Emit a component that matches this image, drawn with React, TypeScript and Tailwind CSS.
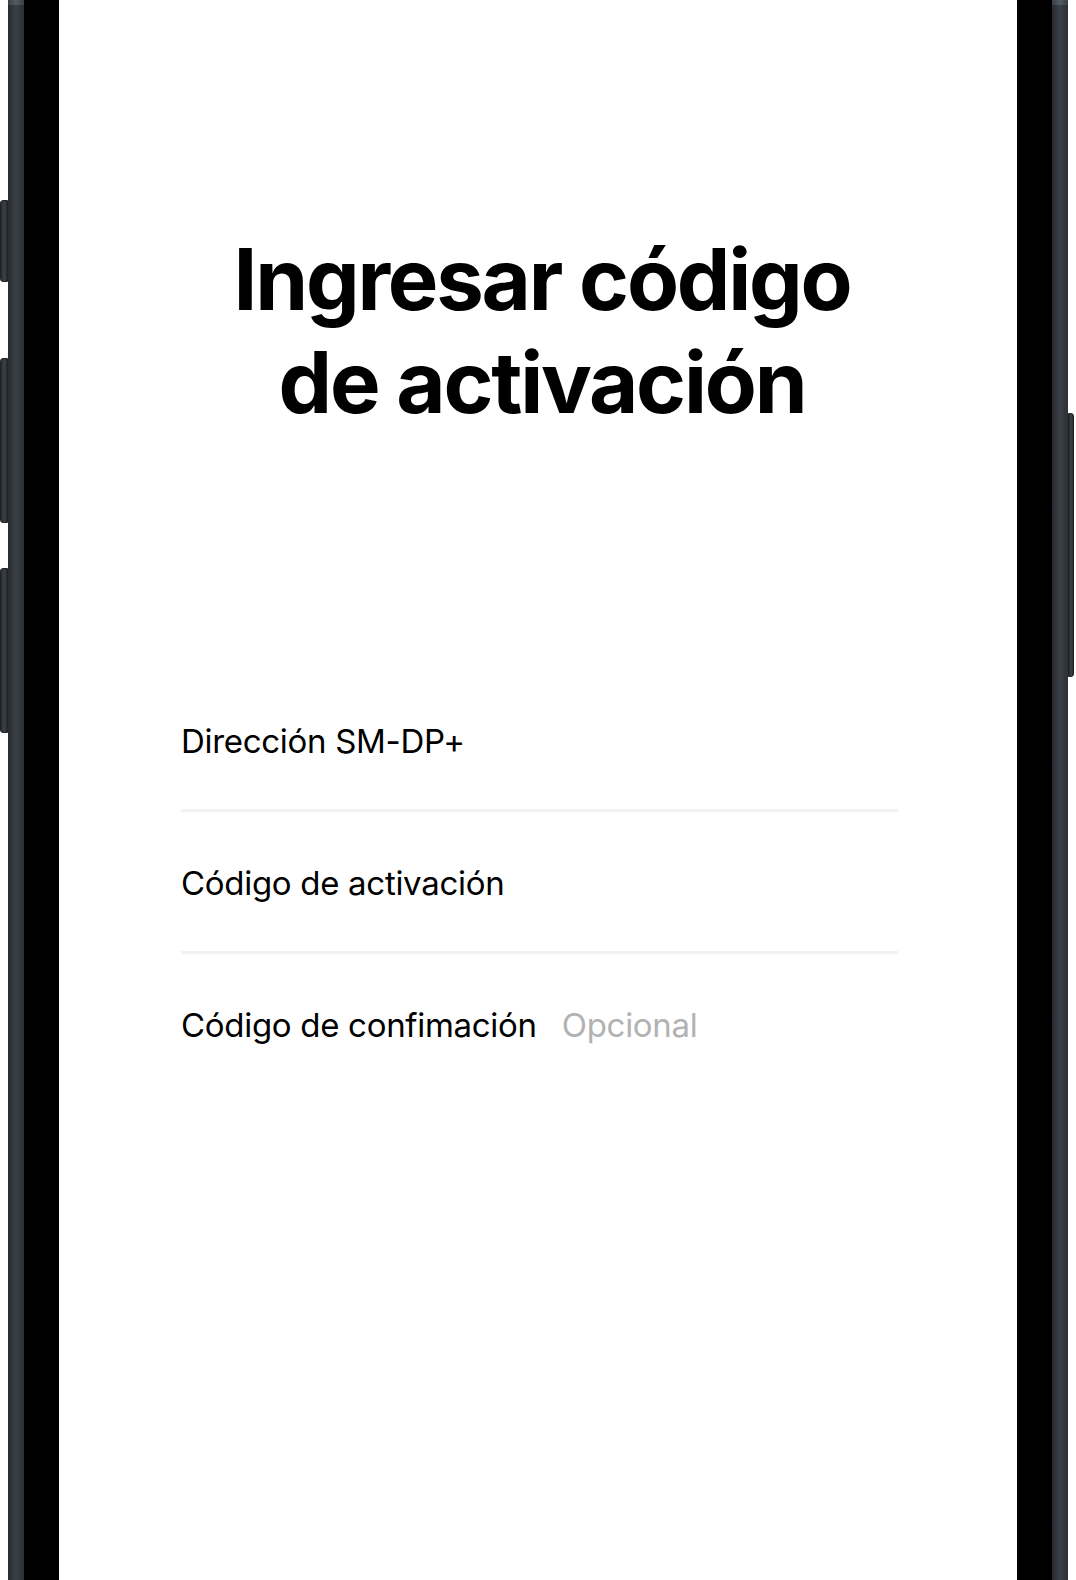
import React from "react";

const font = { fontFamily: "Inter, 'Noto Sans', 'Liberation Sans', sans-serif" };

function SideButton({ h, side }: { h: string; side: "l" | "r" }) {
  return (
    <div
      className={
        h +
        " w-full bg-gradient-to-r from-[#272b30] via-[#3c4147] to-[#2a2e33] border border-[#1f2226] " +
        (side === "l" ? "rounded-l-[3px]" : "rounded-r-[3px]")
      }
    />
  );
}

function Metal() {
  return (
    <div className="flex flex-col h-full w-full">
      <div className="h-[5px] w-full bg-gradient-to-r from-[#3a3f46] via-[#565c64] to-[#3a3f46]" />
      <div className="flex-1 w-full bg-gradient-to-r from-[#272b30] via-[#3b4046] to-[#2c3035]" />
    </div>
  );
}

function Row({ label, extra, first, last }: { label: string; extra?: string; first?: boolean; last?: boolean }) {
  return (
    <div className={(first ? "" : "pt-[51px] ") + (last ? "" : "pb-[48px] border-b-[3px] border-[#f2f2f3]")}>
      <div className="flex text-[33px] leading-[40px] tracking-[-0.3px] text-black">
        <span>{label}</span>
        {extra && <span className="ml-[25px] text-[#b2b2b2]">{extra}</span>}
      </div>
    </div>
  );
}

export default function App() {
  return (
    <div className="w-[1076px] h-[1580px] bg-white flex overflow-hidden" style={font}>
      {/* left buttons */}
      <div className="w-[8px] flex flex-col">
        <div className="h-[200px]" />
        <SideButton h="h-[82px]" side="l" />
        <div className="h-[76px]" />
        <SideButton h="h-[165px]" side="l" />
        <div className="h-[45px]" />
        <SideButton h="h-[165px]" side="l" />
      </div>
      {/* left metal */}
      <div className="w-[16px]">
        <Metal />
      </div>
      {/* left bezel */}
      <div className="w-[35px] bg-black" />
      {/* screen */}
      <div className="w-[958px] bg-white flex flex-col">
        <div className="pt-[228px] pl-[8px] text-center text-[85px] leading-[103px] font-bold tracking-[-2.2px] text-black">
          <div>Ingresar código</div>
          <div>de activación</div>
        </div>
        <div className="mt-[287px] ml-[122px] mr-[119px]">
          <Row label="Dirección SM-DP+" first />
          <Row label="Código de activación" />
          <Row label="Código de confimación" extra="Opcional" last />
        </div>
      </div>
      {/* right bezel */}
      <div className="w-[35px] bg-black" />
      {/* right metal */}
      <div className="w-[16px]">
        <Metal />
      </div>
      {/* right button */}
      <div className="w-[6px] flex flex-col">
        <div className="h-[413px]" />
        <SideButton h="h-[264px]" side="r" />
      </div>
    </div>
  );
}
